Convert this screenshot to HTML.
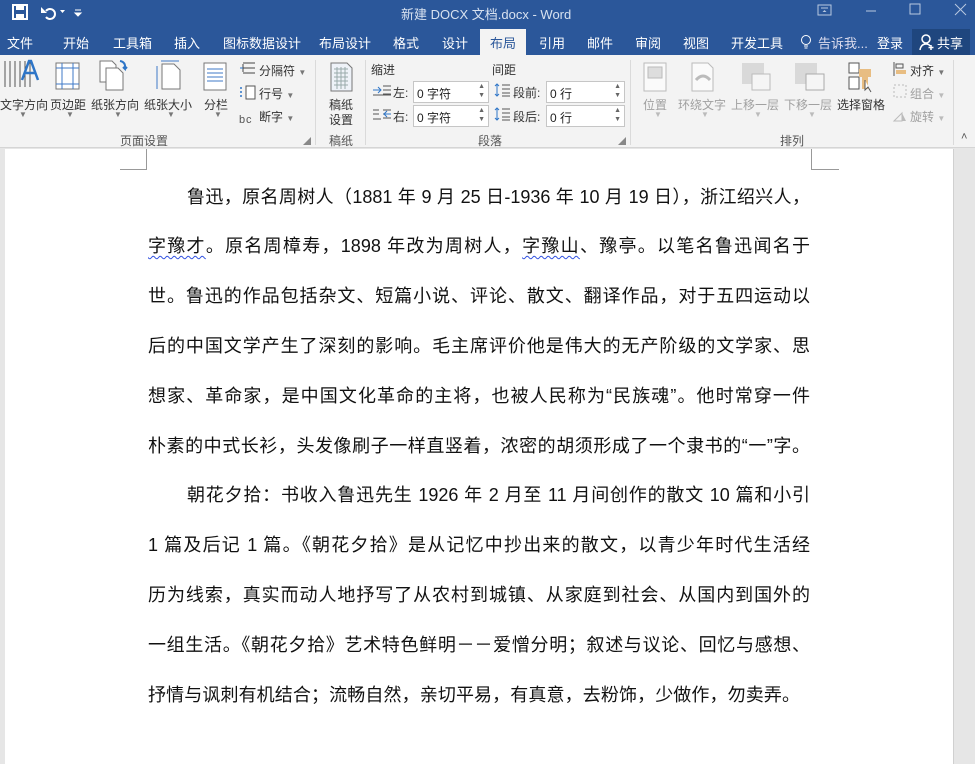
<!DOCTYPE html>
<html><head><meta charset="utf-8"><style>
*{margin:0;padding:0;box-sizing:border-box}
body{width:975px;height:764px;overflow:hidden;background:#e6e6e6;font-family:"Liberation Sans","Noto Sans CJK SC",sans-serif;position:relative}
.a{position:absolute;white-space:nowrap}
#title{left:0;top:0;width:975px;height:29px;background:#2b579a}
#tabs{left:0;top:29px;width:975px;height:26px;background:#2b579a}
.tab{position:absolute;top:33px;color:#fff;font-size:13px}
#rib{left:0;top:55px;width:975px;height:93px;background:#f3f3f3;border-bottom:1px solid #d5d5d5}
.l{position:absolute;font-size:12px;color:#333;white-space:nowrap}
.g{color:#a0a0a0}
.sep{position:absolute;top:60px;width:1px;height:85px;background:#dadada}
.box{position:absolute;background:#fff;border:1px solid #c6c6c6;height:22px;font-size:12px;color:#222;padding:3px 0 0 3px}
#page{left:5px;top:149px;width:948px;height:615px;background:#fff}
.ln{position:absolute;left:148px;width:662px;height:50px;line-height:50px;font-size:18px;color:#111;text-align:justify;text-align-last:justify;white-space:nowrap}
.ln.n{text-align-last:left}
.u{text-decoration:underline wavy #3050e0;text-decoration-thickness:1px;text-underline-offset:3px}
.dd{font-size:8px;color:#777}
</style></head><body>
<div id="title" class="a"></div>
<!-- title bar icons -->
<svg class="a" style="left:10px;top:3px" width="80" height="20" viewBox="0 0 80 20">
<rect x="3" y="2" width="14" height="14" fill="none" stroke="#fff" stroke-width="2"/><rect x="6" y="2" width="8" height="5" fill="#fff"/><rect x="6" y="11" width="8" height="5" fill="#fff"/>
<path d="M36 8 a5 5 0 1 1 0 6" fill="none" stroke="#fff" stroke-width="2"/><path d="M31 4 l0 6 l6 0z" fill="#fff"/>
<path d="M50 7 l5 0 l-2.5 3z" fill="#fff"/><path d="M65 7 h6 M65 10 l6 0 l-3 3z" stroke="#fff" fill="#fff" stroke-width="1"/>
</svg>
<div class="a" style="left:401px;top:4px;color:#d8e2f0;font-size:13px">新建 DOCX 文档.docx - Word</div>
<svg class="a" style="left:815px;top:3px" width="160" height="16"><rect x="3" y="2" width="13" height="10" fill="none" stroke="#b8c8e0"/><path d="M6 5h7" stroke="#b8c8e0"/><path d="M9.5 7l-2 2h4z" fill="#b8c8e0"/><path d="M51 8h10" stroke="#b8c8e0"/><rect x="95" y="1" width="10" height="10" fill="none" stroke="#b8c8e0"/><path d="M140 1l11 11M151 1l-11 11" stroke="#b8c8e0"/></svg>
<div id="tabs" class="a"></div>
<div class="tab" style="left:7px">文件</div>
<div class="tab" style="left:63px">开始</div>
<div class="tab" style="left:113px">工具箱</div>
<div class="tab" style="left:174px">插入</div>
<div class="tab" style="left:223px">图标数据设计</div>
<div class="tab" style="left:319px">布局设计</div>
<div class="tab" style="left:393px">格式</div>
<div class="tab" style="left:442px">设计</div>
<div class="a" style="left:480px;top:29px;width:46px;height:27px;background:#f3f3f3"></div>
<div class="tab" style="left:490px;color:#2b579a">布局</div>
<div class="tab" style="left:539px">引用</div>
<div class="tab" style="left:587px">邮件</div>
<div class="tab" style="left:635px">审阅</div>
<div class="tab" style="left:683px">视图</div>
<div class="tab" style="left:731px">开发工具</div>
<svg class="a" style="left:800px;top:34px" width="12" height="16"><circle cx="6" cy="6" r="4.5" fill="none" stroke="#fff"/><path d="M4 12h4M4.5 14h3" stroke="#fff"/></svg>
<div class="tab" style="left:818px;color:#dde">告诉我...</div>
<div class="tab" style="left:877px">登录</div>
<div class="a" style="left:912px;top:29px;width:58px;height:26px;background:#1f467e"></div>
<svg class="a" style="left:918px;top:33px" width="18" height="18"><circle cx="8" cy="6" r="4" fill="none" stroke="#fff" stroke-width="1.5"/><path d="M2 17 q1-6 6-6 q3 0 4 2 M13 12v5M10.5 14.5h5" fill="none" stroke="#fff" stroke-width="1.5"/></svg>
<div class="tab" style="left:937px">共享</div>

<div id="rib" class="a"></div>
<!-- page setup icons -->
<svg class="a" style="left:0;top:58px" width="320" height="40">
<g stroke="#555" stroke-width="1"><path d="M5 3v26M10 3v26M15 3v26M20 3v26M25 3v26M30 3v26"/></g>
<path d="M22 22l7-19h2l7 19M25 15h10" stroke="#2e75c7" stroke-width="2.5" fill="none"/>
<rect x="56" y="5" width="23" height="26" fill="#fff" stroke="#777"/><path d="M62 5v26M73 5v26M56 10h23M56 26h23" stroke="#3f7ac7"/>
<path d="M100 3h12l4 4v17h-16z" fill="#fff" stroke="#777"/><path d="M106 10h12l5 5v17h-17z" fill="#fff" stroke="#777"/><path d="M120 3q6 1 5 8l-2-2m2 2l2-2" stroke="#2e75c7" stroke-width="2" fill="none"/>
<path d="M162 6h12l6 6v19h-18z" fill="#fff" stroke="#777"/><path d="M157 8v23M161 3h18" stroke="#3f7ac7"/>
<rect x="204" y="5" width="22" height="27" fill="#fff" stroke="#777"/><path d="M207 11h16M207 15h16M207 19h16M207 23h16" stroke="#3f7ac7"/>
</svg>
<div class="l" style="left:0;top:96px">文字方向</div>
<div class="l" style="left:50px;top:96px">页边距</div>
<div class="l" style="left:91px;top:96px">纸张方向</div>
<div class="l" style="left:144px;top:96px">纸张大小</div>
<div class="l" style="left:204px;top:96px">分栏</div>
<div class="l dd" style="left:19px;top:110px">▼</div><div class="l dd" style="left:66px;top:110px">▼</div><div class="l dd" style="left:114px;top:110px">▼</div><div class="l dd" style="left:167px;top:110px">▼</div><div class="l dd" style="left:214px;top:110px">▼</div>
<svg class="a" style="left:238px;top:60px" width="20" height="66"><path d="M5 4v8M5 8h12M5 3h12M5 13h12" stroke="#444" fill="none"/><path d="M2 8h3" stroke="#2e75c7"/><rect x="8" y="26" width="9" height="13" fill="#fff" stroke="#555"/><path d="M3 27v2M3 31v2M3 35v2" stroke="#2e75c7" stroke-width="1.5"/><text x="1" y="63" font-size="11" fill="#555" font-family="Liberation Sans">b</text><text x="8" y="63" font-size="11" fill="#555" font-family="Liberation Sans">c</text></svg>
<div class="l" style="left:259px;top:62px">分隔符 <span class="dd">▼</span></div>
<div class="l" style="left:259px;top:85px">行号 <span class="dd">▼</span></div>
<div class="l" style="left:259px;top:108px">断字 <span class="dd">▼</span></div>
<div class="l" style="left:120px;top:132px;color:#555">页面设置</div>
<div class="l" style="left:303px;top:136px;font-size:8px;color:#888">◢</div>
<div class="sep" style="left:315px"></div>
<svg class="a" style="left:330px;top:62px" width="24" height="30"><path d="M1 1h16l5 5v23h-21z" fill="#eef2f8" stroke="#777"/><g stroke="#9aa" stroke-width="1"><path d="M4 7h14M4 11h14M4 15h14M4 19h14M4 23h14M7 5v22M11 5v22M15 5v22"/></g></svg>
<div class="l" style="left:329px;top:96px">稿纸</div>
<div class="l" style="left:329px;top:111px">设置</div>
<div class="l" style="left:329px;top:132px;color:#555">稿纸</div>
<div class="sep" style="left:365px"></div>
<div class="l" style="left:371px;top:61px">缩进</div>
<div class="l" style="left:492px;top:61px">间距</div>
<svg class="a" style="left:373px;top:84px" width="20" height="40"><path d="M0 6h8M5 3l3 3-3 3" stroke="#2e75c7" fill="none"/><path d="M10 2h8M10 6h8M10 10h8M0 11h18" stroke="#555"/><path d="M10 26h8M10 30h8M10 34h8M0 35h8M0 26h6M0 30h6" stroke="#555"/><path d="M11 30h7M14 27l-3 3 3 3" stroke="#2e75c7" fill="none"/></svg>
<div class="l" style="left:393px;top:84px">左:</div>
<div class="l" style="left:393px;top:108px">右:</div>
<div class="box" style="left:413px;top:81px;width:76px">0 字符<span style="position:absolute;right:3px;top:0;font-size:7px;color:#666;line-height:9px">▲<br>▼</span></div>
<div class="box" style="left:413px;top:105px;width:76px">0 字符<span style="position:absolute;right:3px;top:0;font-size:7px;color:#666;line-height:9px">▲<br>▼</span></div>
<svg class="a" style="left:494px;top:82px" width="18" height="44"><path d="M3 2v12M1 4l2-2 2 2M1 12l2 2 2-2" stroke="#2e75c7" fill="none"/><path d="M8 3h8M8 7h8M8 11h8M8 14h8" stroke="#555"/><path d="M3 26v12M1 28l2-2 2 2M1 36l2 2 2-2" stroke="#2e75c7" fill="none"/><path d="M8 27h8M8 31h8M8 35h8M8 38h8" stroke="#555"/></svg>
<div class="l" style="left:513px;top:84px">段前:</div>
<div class="l" style="left:513px;top:108px">段后:</div>
<div class="box" style="left:546px;top:81px;width:79px">0 行<span style="position:absolute;right:3px;top:0;font-size:7px;color:#666;line-height:9px">▲<br>▼</span></div>
<div class="box" style="left:546px;top:105px;width:79px">0 行<span style="position:absolute;right:3px;top:0;font-size:7px;color:#666;line-height:9px">▲<br>▼</span></div>
<div class="l" style="left:478px;top:132px;color:#555">段落</div>
<div class="l" style="left:618px;top:136px;font-size:8px;color:#888">◢</div>
<div class="sep" style="left:630px"></div>
<svg class="a" style="left:640px;top:60px" width="300" height="36">
<rect x="4" y="3" width="22" height="28" fill="#fafafa" stroke="#bbb"/><rect x="8" y="7" width="14" height="11" fill="#ddd" stroke="#bbb"/>
<path d="M52 3h16l5 5v23h-21z" fill="#fafafa" stroke="#bbb"/><path d="M56 20q7-8 14 0" stroke="#bbb" stroke-width="3" fill="none"/>
<rect x="102" y="3" width="22" height="21" fill="#d9d9d9"/><rect x="112" y="14" width="18" height="16" fill="#f5f5f5" stroke="#bbb"/>
<rect x="155" y="3" width="22" height="21" fill="#d9d9d9"/><rect x="166" y="14" width="18" height="16" fill="#f5f5f5" stroke="#aaa"/>
<rect x="209" y="3" width="10" height="10" fill="#fff" stroke="#555"/><rect x="209" y="17" width="10" height="12" fill="#fff" stroke="#555"/><rect x="219" y="9" width="12" height="8" fill="#e8bd82"/><rect x="222" y="15" width="6" height="14" fill="#e8bd82"/><path d="M225 20v10l3-3 3 5" stroke="#555" fill="#fff"/>
</svg>
<div class="l g" style="left:643px;top:96px">位置</div>
<div class="l g" style="left:678px;top:96px">环绕文字</div>
<div class="l g" style="left:731px;top:96px">上移一层</div>
<div class="l g" style="left:784px;top:96px">下移一层</div>
<div class="l" style="left:837px;top:96px">选择窗格</div>
<div class="l dd" style="left:654px;top:110px;color:#bbb">▼</div><div class="l dd" style="left:701px;top:110px;color:#bbb">▼</div><div class="l dd" style="left:754px;top:110px;color:#bbb">▼</div><div class="l dd" style="left:808px;top:110px;color:#bbb">▼</div>
<svg class="a" style="left:891px;top:61px" width="18" height="64"><path d="M3 1v14" stroke="#555"/><rect x="5" y="3" width="7" height="4" fill="none" stroke="#555"/><rect x="5" y="9" width="10" height="4" fill="#e8bd82"/><rect x="3" y="24" width="12" height="12" fill="none" stroke="#bbb" stroke-dasharray="2 2"/><path d="M3 60l8-8v8z" fill="none" stroke="#bbb"/><path d="M11 52l4 8h-4z" fill="#bbb"/></svg>
<div class="l" style="left:910px;top:62px">对齐 <span class="dd">▼</span></div>
<div class="l g" style="left:910px;top:85px">组合 <span class="dd" style="color:#bbb">▼</span></div>
<div class="l g" style="left:910px;top:108px">旋转 <span class="dd" style="color:#bbb">▼</span></div>
<div class="l" style="left:780px;top:132px;color:#555">排列</div>
<div class="sep" style="left:953px"></div>
<div class="l" style="left:961px;top:131px;font-size:11px;color:#555">˄</div>

<div id="page" class="a"></div>
<div class="a" style="left:146px;top:149px;width:1px;height:21px;background:#999"></div>
<div class="a" style="left:120px;top:169px;width:27px;height:1px;background:#999"></div>
<div class="a" style="left:811px;top:149px;width:1px;height:21px;background:#999"></div>
<div class="a" style="left:811px;top:169px;width:28px;height:1px;background:#999"></div>
<div class="a" style="left:953px;top:149px;width:22px;height:615px;background:#e6e6e6;border-left:1px solid #d0d0d0"></div>

<div class="ln" style="top:172px;left:187px;width:623px">鲁迅，原名周树人（1881 年 9 月 25 日-1936 年 10 月 19 日），浙江绍兴人，</div>
<div class="ln" style="top:221px"><span class="u">字豫才</span>。原名周樟寿，1898 年改为周树人，<span class="u">字豫山</span>、豫亭。以笔名鲁迅闻名于</div>
<div class="ln" style="top:271px">世。鲁迅的作品包括杂文、短篇小说、评论、散文、翻译作品，对于五四运动以</div>
<div class="ln" style="top:321px">后的中国文学产生了深刻的影响。毛主席评价他是伟大的无产阶级的文学家、思</div>
<div class="ln" style="top:371px">想家、革命家，是中国文化革命的主将，也被人民称为“民族魂”。他时常穿一件</div>
<div class="ln" style="top:421px">朴素的中式长衫，头发像刷子一样直竖着，浓密的胡须形成了一个隶书的“一”字。</div>
<div class="ln" style="top:470px;left:187px;width:623px">朝花夕拾：书收入鲁迅先生 1926 年 2 月至 11 月间创作的散文 10 篇和小引</div>
<div class="ln" style="top:520px">1 篇及后记 1 篇。《朝花夕拾》是从记忆中抄出来的散文，以青少年时代生活经</div>
<div class="ln" style="top:570px">历为线索，真实而动人地抒写了从农村到城镇、从家庭到社会、从国内到国外的</div>
<div class="ln" style="top:620px">一组生活。《朝花夕拾》艺术特色鲜明－－爱憎分明；叙述与议论、回忆与感想、</div>
<div class="ln" style="top:670px;width:652px">抒情与讽刺有机结合；流畅自然，亲切平易，有真意，去粉饰，少做作，勿卖弄。</div>
</body></html>
